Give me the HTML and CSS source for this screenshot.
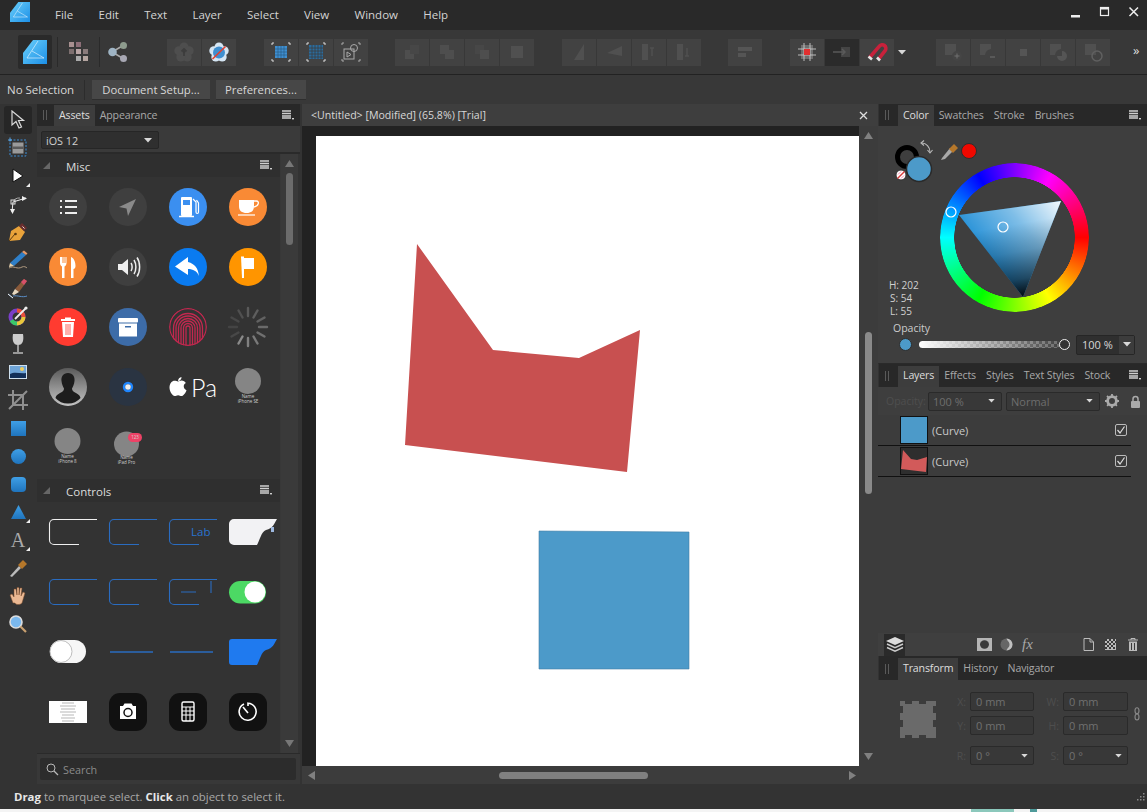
FILE: index.html
```html
<!DOCTYPE html>
<html lang="en">
<head>
<meta charset="utf-8">
<title>Affinity Designer</title>
<link rel="stylesheet" href="styles.css">
</head>
<body>
<svg class="defs" width="0" height="0" aria-hidden="true">
  <defs>
    <linearGradient id="logoG" x1="0" y1="0" x2="1" y2="1"><stop offset="0" stop-color="#6bd0fb"/><stop offset="1" stop-color="#1c8fe6"/></linearGradient>
    <linearGradient id="toolBlue" x1="0" y1="0" x2="0" y2="1"><stop offset="0" stop-color="#3f9fe6"/><stop offset="1" stop-color="#1f74bd"/></linearGradient>
    <linearGradient id="avatarG" x1="0" y1="0" x2="0" y2="1"><stop offset="0" stop-color="#5a5a5a"/><stop offset="1" stop-color="#c4c4c4"/></linearGradient>
    <linearGradient id="triWhite" gradientUnits="userSpaceOnUse" x1="1061" y1="201" x2="990" y2="258"><stop offset="0" stop-color="#fff" stop-opacity=".95"/><stop offset=".5" stop-color="#fff" stop-opacity=".4"/><stop offset="1" stop-color="#fff" stop-opacity="0"/></linearGradient>
    <linearGradient id="triBlack" gradientUnits="userSpaceOnUse" x1="1023" y1="297" x2="1007" y2="207"><stop offset="0" stop-color="#000" stop-opacity=".95"/><stop offset=".2" stop-color="#000" stop-opacity=".55"/><stop offset=".5" stop-color="#000" stop-opacity=".2"/><stop offset=".8" stop-color="#000" stop-opacity="0"/></linearGradient>
    <clipPath id="fpClip"><circle cx="30" cy="30" r="19"/></clipPath>
    <symbol id="logo" viewBox="0 0 24 24">
      <path d="M10 0H24V24H0V13Z" fill="url(#logoG)"/>
      <path d="M15 1 4 18H21M9 11 21 18" fill="none" stroke="#e8f6ff" stroke-opacity=".8" stroke-width=".8"/>
    </symbol>
    <symbol id="menu" viewBox="0 0 12 10">
      <path d="M0 1h9M0 3.500h9M0 6h9M0 8h9" stroke="#cfcfcf" stroke-width="1.300"/><rect x="10" y="8" width="2" height="1.400" fill="#cfcfcf"/>
    </symbol>
    <symbol id="caret" viewBox="0 0 8 5"><path d="M0 0h8L4 4.500Z" fill="#d8d8d8"/></symbol>
  </defs>
</svg>

<div class="app">
  <header class="titlebar">
    <svg class="top-logo"><use href="#logo"/></svg>
    <nav class="menubar">
      <span>File</span><span>Edit</span><span>Text</span><span>Layer</span><span>Select</span><span>View</span><span>Window</span><span>Help</span>
    </nav>
    <div class="winctl">
      <svg width="12" height="12" viewBox="0 0 12 12"><rect x="1" y="9" width="9" height="2.500" fill="#eee"/></svg>
      <svg width="12" height="12" viewBox="0 0 12 12"><rect x="1.500" y="1.500" width="8" height="8" fill="none" stroke="#eee" stroke-width="1.200"/><rect x="1" y="1" width="9" height="2.500" fill="#eee"/></svg>
      <svg width="12" height="12" viewBox="0 0 12 12"><path d="M1.500 1.500 10 10M10 1.500 1.500 10" stroke="#eee" stroke-width="1.500"/></svg>
    </div>
  </header>

  <div class="toolbar">
    <div class="app-btn"><svg width="24" height="24"><use href="#logo"/></svg></div>
    <i class="tb-sep"></i>
    <svg class="tb-plain" width="20" height="20" viewBox="0 0 20 20">
      <g fill="#b8a8a8"><rect x="0" y="0" width="5" height="5" fill="#a89090"/><rect x="7" y="0" width="5" height="5" fill="#8d6f78"/><rect x="7" y="7" width="5" height="5" fill="#b9a5a5"/><rect x="0" y="7" width="5" height="5" fill="#7d6f6f"/><rect x="14" y="7" width="5" height="5" fill="#8a7b7b"/><rect x="7" y="14" width="5" height="5" fill="#aaa"/><rect x="14" y="14" width="5" height="5" fill="#b5a5a0"/></g>
    </svg>
    <i class="tb-sep tb-sep-b"></i>
    <svg class="tb-plain tb-share" width="20" height="20" viewBox="0 0 20 20"><path d="M4 10 16 3M4 10l12 7" stroke="#aaa" stroke-width="1.500"/><circle cx="4.500" cy="10" r="4.300" fill="#9fb4c4"/><circle cx="15.500" cy="3.500" r="3.500" fill="#8d9b8d"/><circle cx="15.500" cy="16.500" r="3.500" fill="#a8a8b4"/></svg>

    <div class="tb-groups">
      <div class="group">
        <button class="tb"><svg width="20" height="20" viewBox="0 0 20 20"><g fill="#4e4e4e"><circle cx="10" cy="5" r="4.500"/><circle cx="15.200" cy="8.800" r="4.500"/><circle cx="13.200" cy="15" r="4.500"/><circle cx="6.800" cy="15" r="4.500"/><circle cx="4.800" cy="8.800" r="4.500"/></g><path d="M10 7v7M7.500 9.500 10 7l2.500 2.500" stroke="#3d3d3d" stroke-width="1.800" fill="none"/></svg></button>
        <button class="tb"><svg width="20" height="20" viewBox="0 0 20 20"><g fill="#d5e6f4"><circle cx="10" cy="5" r="4.500"/><circle cx="15.200" cy="8.800" r="4.500"/><circle cx="13.200" cy="15" r="4.500"/><circle cx="6.800" cy="15" r="4.500"/><circle cx="4.800" cy="8.800" r="4.500"/></g><circle cx="10" cy="10.500" r="6" fill="#3f8fd0"/><path d="M3.500 17 16.500 4.500" stroke="#e4402e" stroke-width="1.600"/></svg></button>
      </div>
      <div class="group">
        <button class="tb"><svg width="20" height="20" viewBox="0 0 20 20"><g fill="none" stroke="#ddd" stroke-width="1"><path d="M1 3V1h2M17 1h2v2M19 17v2h-2M3 19H1v-2"/></g><rect x="4" y="4" width="12" height="12" fill="#3f8fd0"/><path d="M4 7h12M4 10h12M4 13h12M7 4v12M10 4v12M13 4v12" stroke="#2a5d86" stroke-width=".7"/></svg></button>
        <button class="tb"><svg width="20" height="20" viewBox="0 0 20 20"><g fill="none" stroke="#ddd" stroke-width="1"><path d="M1 3V1h2M17 1h2v2M19 17v2h-2M3 19H1v-2"/></g><rect x="3" y="3" width="14" height="14" fill="#2a6c9e"/><path d="M3 6h14M3 9h14M3 12h14M3 15h14M6 3v14M9 3v14M12 3v14M15 3v14" stroke="#3d3d3d" stroke-width=".8"/></svg></button>
        <button class="tb"><svg width="20" height="20" viewBox="0 0 20 20"><g fill="none" stroke="#aaa" stroke-width="1"><path d="M1 3V1h2M17 1h2v2M19 17v2h-2M3 19H1v-2"/><rect x="3" y="7" width="10" height="10"/><circle cx="13" cy="6" r="3.500"/><path d="M6 10v5l4-2.500Z"/></g></svg></button>
      </div>
      <div class="group">
        <button class="tb"><svg width="20" height="20" viewBox="0 0 20 20" fill="#4e4e4e"><rect x="3" y="8" width="9" height="9"/><rect x="8" y="3" width="9" height="9" fill="#474747"/></svg></button>
        <button class="tb"><svg width="20" height="20" viewBox="0 0 20 20" fill="#4e4e4e"><path d="M3 3h9v5h5v9H8v-5H3Z"/></svg></button>
        <button class="tb"><svg width="20" height="20" viewBox="0 0 20 20" fill="#4e4e4e"><path d="M3 3h9v5h5v9H8v-5H3Z" fill="#474747"/><rect x="8" y="8" width="9" height="9"/></svg></button>
        <button class="tb"><svg width="20" height="20" viewBox="0 0 20 20"><rect x="4" y="4" width="12" height="12" fill="#505050"/></svg></button>
      </div>
      <div class="group">
        <button class="tb"><svg width="20" height="20" viewBox="0 0 20 20"><path d="M15 2 5 18h10Z" fill="#505050"/></svg></button>
        <button class="tb"><svg width="20" height="20" viewBox="0 0 20 20"><path d="M18 4 3 11l15 3Z" fill="#505050"/></svg></button>
        <button class="tb"><svg width="20" height="20" viewBox="0 0 20 20"><rect x="3" y="2" width="6" height="16" fill="#505050"/><path d="M13 6v8M11 6h4" stroke="#505050" stroke-width="1.500"/></svg></button>
        <button class="tb"><svg width="20" height="20" viewBox="0 0 20 20"><rect x="3" y="2" width="6" height="16" fill="#505050"/><path d="M13 6v8M11 14h4" stroke="#505050" stroke-width="1.500"/></svg></button>
      </div>
      <div class="group">
        <button class="tb"><svg width="20" height="20" viewBox="0 0 20 20" fill="#555"><rect x="3" y="5" width="14" height="4"/><rect x="3" y="11" width="8" height="4"/></svg></button>
      </div>
      <div class="group">
        <button class="tb"><svg width="20" height="20" viewBox="0 0 20 20"><path d="M4 3h12v14H4Z" fill="#6f6f6f"/><path d="M1 7h18M1 13h18M7 1v18M13 1v18" stroke="#c8c8c8" stroke-width=".9"/><rect x="7" y="7" width="6" height="6" fill="#e23030"/></svg></button>
        <button class="tb tb-dark"><svg width="20" height="20" viewBox="0 0 20 20"><rect x="9" y="5" width="9" height="10" fill="#444"/><path d="M1 10h12M10 7l3 3-3 3" stroke="#5a5a5a" stroke-width="1.500" fill="none"/></svg></button>
        <button class="tb"><svg width="22" height="22" viewBox="0 0 22 22"><path d="M4 17 13 5a3.500 3.500 0 0 1 6 4L13 18" fill="none" stroke="#c8213b" stroke-width="3.600" transform="rotate(4 11 11)"/><path d="M2.500 15.500l3.500 3M11 16.500l3 3" stroke="#e4e4e4" stroke-width="2.600"/></svg></button>
        <button class="tb tb-drop"><svg width="8" height="5"><use href="#caret"/></svg></button>
      </div>
      <div class="group">
        <button class="tb"><svg width="22" height="22" viewBox="0 0 22 22"><rect x="3" y="3" width="11" height="11" fill="#505050"/><circle cx="15" cy="15" r="5" fill="#454545"/><path d="M15 12.500v5M12.500 15h5" stroke="#707070"/></svg></button>
        <button class="tb"><svg width="22" height="22" viewBox="0 0 22 22"><path d="M3 3h11v5a7 7 0 0 0-6 6H3Z" fill="#505050"/><path d="M13 16h5" stroke="#707070"/></svg></button>
        <button class="tb"><svg width="22" height="22" viewBox="0 0 22 22"><rect x="8" y="8" width="7" height="7" fill="#555"/></svg></button>
        <button class="tb"><svg width="22" height="22" viewBox="0 0 22 22"><path d="M3 3h11v5a7 7 0 0 0-6 6H3Z" fill="#505050"/><path d="M15 10a5 5 0 0 1 0 10 5 5 0 0 1-5-5h5Z" fill="#555"/></svg></button>
        <button class="tb"><svg width="22" height="22" viewBox="0 0 22 22"><rect x="3" y="3" width="11" height="11" fill="#505050"/><circle cx="15" cy="15" r="5" fill="none" stroke="#606060" stroke-width="1.500"/></svg></button>
      </div>
    </div>
    <span class="more">»</span>
  </div>

  <div class="context">
    <span class="ctx-label">No Selection</span>
    <i class="ctx-sep"></i>
    <button class="ctx-btn ctx-doc">Document Setup...</button>
    <button class="ctx-btn ctx-pref">Preferences...</button>
  </div>

  <div class="main">
    <aside class="tools">
      <div class="tool tool-on"><svg width="16" height="20" viewBox="0 0 16 20"><path d="M2 1v14l4-3.500 3 6.500 2.500-1-3-6.500h5Z" fill="#2b2b2b" stroke="#d8d8d8" stroke-width="1.200"/></svg></div>
      <div class="tool"><svg width="22" height="22" viewBox="0 0 22 22"><rect x="3" y="3" width="16" height="16" fill="none" stroke="#3c8fd8" stroke-dasharray="2 1.500"/><rect x="5.500" y="5.500" width="11" height="11" fill="#9a9a9a"/><rect x="5.500" y="9.500" width="11" height="2.500" fill="#5a5a5a"/><path d="M3 .5v4M1 3h4" stroke="#5aa7e8"/></svg></div>
      <div class="tool tool-more"><svg width="16" height="16" viewBox="0 0 16 16"><path d="M3 1 13 8 3 14Z" fill="#fff" stroke="#111"/></svg></div>
      <div class="tool"><svg width="22" height="22" viewBox="0 0 22 22"><path d="M6 9 19 5M6 9 5 19" stroke="#eee" stroke-width="1"/><path d="M6 9a7 7 0 0 1 7-4" fill="none" stroke="#aaa"/><rect x="4" y="7" width="4" height="4" fill="none" stroke="#ddd"/><path d="M15 3l5 2.500-5 2.500ZM3 16l2.500 5 2.500-5Z" fill="#eee"/></svg></div>
      <div class="tool"><svg width="22" height="22" viewBox="0 0 22 22"><path d="M2 20 4 10 12 5l6 6-5 8Z" fill="#e9a33a"/><path d="M2 20 8 13" stroke="#5b3a10"/><circle cx="8.500" cy="13" r="1.300" fill="#5b3a10"/><path d="M12 5l3-3 5 5-3 3Z" fill="#6a2e2e"/><path d="M15.500 5.500l2 2" stroke="#ddd"/></svg></div>
      <div class="tool"><svg width="22" height="22" viewBox="0 0 22 22"><path d="M3 14 15 3l4 3L7 17Z" fill="#2f7fc8"/><path d="M15 3l2-1.500 3.500 3L19 6Z" fill="#e59a6a"/><path d="M3 14l-1 4 5-1Z" fill="#ead5b0"/><path d="M2 19c5-3 8 2 13-1 2-1 4 0 5 1" fill="none" stroke="#b09a80"/></svg></div>
      <div class="tool"><svg width="22" height="22" viewBox="0 0 22 22"><path d="M8 12 17 2l3 2-8 11Z" fill="#8a5a3a"/><path d="M14 5l3-3 3 2-3 4Z" fill="#d8506a"/><path d="M8 12l4 3-5 3-2-1Z" fill="#e8d8c0"/><path d="M1 17l5 4M6 19c5-1 9 2 14 0" fill="none" stroke="#5a8ec8"/><path d="M1 17l5 4" stroke="#eee"/></svg></div>
      <div class="tool"><svg width="22" height="22" viewBox="0 0 22 22"><circle cx="10" cy="12" r="6.500" fill="none" stroke="#7a3fc8" stroke-width="4"/><path d="M10 5.500a6.500 6.500 0 0 1 6.500 6.500" fill="none" stroke="#e8503a" stroke-width="4"/><path d="M16.500 12a6.500 6.500 0 0 1-6.500 6.500" fill="none" stroke="#e8c83a" stroke-width="4"/><path d="M10 18.500a6.500 6.500 0 0 1-5.600-3.200" fill="none" stroke="#3ac86a" stroke-width="4"/><path d="M8 14 19 3" stroke="#eee" stroke-width="1.800"/><circle cx="19" cy="3" r="1.600" fill="#eee"/></svg></div>
      <div class="tool"><svg width="20" height="22" viewBox="0 0 20 22"><path d="M5 1h10c1 6 0 11-5 11S4 7 5 1Z" fill="#ccc"/><path d="M10 12v7M5 20h10" stroke="#bbb" stroke-width="1.500"/></svg></div>
      <div class="tool"><svg width="22" height="20" viewBox="0 0 22 20"><rect x="2" y="3" width="18" height="14" fill="#cfe0ee"/><rect x="3" y="4" width="16" height="12" fill="#6fa5d8"/><path d="M3 12c5-3 10 0 16-1v5H3Z" fill="#12305a"/><circle cx="15" cy="7" r="2" fill="#f0d060"/></svg></div>
      <div class="tool"><svg width="20" height="20" viewBox="0 0 20 20"><path d="M5 0v15h15M0 5h15v15M19 1 1 19" fill="none" stroke="#8f8f8f" stroke-width="2"/></svg></div>
      <div class="tool"><svg width="15" height="15"><rect width="15" height="15" fill="url(#toolBlue)"/></svg></div>
      <div class="tool"><svg width="15" height="15"><circle cx="7.500" cy="7.500" r="7.500" fill="url(#toolBlue)"/></svg></div>
      <div class="tool"><svg width="15" height="15"><rect width="15" height="15" rx="4" fill="url(#toolBlue)"/></svg></div>
      <div class="tool tool-more"><svg width="15" height="15"><path d="M7.500 0 15 14H0Z" fill="url(#toolBlue)"/></svg></div>
      <div class="tool tool-more tool-a">A</div>
      <div class="tool"><svg width="20" height="20" viewBox="0 0 20 20"><path d="M2 18 11 8l2 2-9 9Z" fill="#bbb"/><path d="M10 7l5-5 4 4-5 5Z" fill="#b5772a"/></svg></div>
      <div class="tool"><svg width="20" height="20" viewBox="0 0 20 20"><path d="M5 17 2 9l2-1 2 3V3l2 0 1 6V1.500h2V9l1-7h2l-1 8 2-4 2 1-3 10c-2 2-6 2-7 0Z" fill="#eab893" stroke="#7a4a2a" stroke-width=".5"/></svg></div>
      <div class="tool"><svg width="20" height="20" viewBox="0 0 20 20"><circle cx="8" cy="8" r="6" fill="#7ab8ee" stroke="#ddd" stroke-width="1.600"/><path d="M12.500 12.500 18 18" stroke="#c8a070" stroke-width="2.200"/></svg></div>
    </aside>

    <section class="assets">
      <div class="tabbar">
        <i class="grip"></i>
        <span class="tab tab-on">Assets</span>
        <span class="tab">Appearance</span>
        <svg class="panel-menu" width="12" height="10"><use href="#menu"/></svg>
      </div>
      <div class="assets-select">
        <div class="select select-ios"><span>iOS 12</span><svg width="8" height="5"><use href="#caret"/></svg></div>
      </div>
      <div class="assets-body">
        <div class="assets-list">
          <div class="cat-head">
            <svg class="cat-tri" width="7" height="7"><path d="M7 0v7H0Z" fill="#666"/></svg>
            <span>Misc</span>
            <svg class="panel-menu" width="12" height="10"><use href="#menu"/></svg>
          </div>
          <div class="asset-grid">
            <div class="asset"><svg viewBox="0 0 60 60"><circle cx="30" cy="30" r="19" fill="#3f3f3f"/><path d="M27 24h12M27 30h12M27 36h12" stroke="#eee" stroke-width="2"/><path d="M22 24h2M22 30h2M22 36h2" stroke="#eee" stroke-width="2"/></svg></div>
            <div class="asset"><svg viewBox="0 0 60 60"><circle cx="30" cy="30" r="19" fill="#3f3f3f"/><path d="M38 22 30 39l-1.500-7.500L21 30Z" fill="#8a8a8a"/></svg></div>
            <div class="asset"><svg viewBox="0 0 60 60"><circle cx="30" cy="30" r="19" fill="#3b8ff0"/><rect x="23" y="20" width="11" height="19" rx="1" fill="#fff"/><rect x="25" y="23" width="7" height="5" fill="#3b8ff0"/><path d="M21 39.500h15" stroke="#fff" stroke-width="1.500"/><path d="M35 22l3 3v10c0 2 2.500 2 2.500 0v-9l-2-3" fill="none" stroke="#fff" stroke-width="1.200"/></svg></div>
            <div class="asset"><svg viewBox="0 0 60 60"><circle cx="30" cy="30" r="19" fill="#f98a35"/><path d="M21 23h15v6c0 5-3 7-7.500 7S21 34 21 29Z" fill="#fff"/><path d="M36 24h2.500c3 0 2.500 5-2.500 6" fill="none" stroke="#fff" stroke-width="1.300"/><path d="M20 38h17" stroke="#fff" stroke-width="1.200"/></svg></div>

            <div class="asset"><svg viewBox="0 0 60 60"><circle cx="30" cy="30" r="19" fill="#f98a35"/><path d="M22 20v6c0 2 1 3 2 3.500V41h2.500V29.500c1-.5 2-1.500 2-3.500v-6h-1v6h-1v-6h-1v6h-1v-6Z" fill="#fff"/><path d="M33 41V20c3 1 4.500 5 4.500 9 0 2-1 3-2 3v9Z" fill="#fff"/></svg></div>
            <div class="asset"><svg viewBox="0 0 60 60"><circle cx="30" cy="30" r="19" fill="#3f3f3f"/><path d="M20 27h4l6-5v16l-6-5h-4Z" fill="#eee"/><path d="M33 26c1.500 2 1.500 6 0 8M36 23c2.500 4 2.500 10 0 14M39 20.500c3.500 5 3.500 14 0 19" fill="none" stroke="#eee" stroke-width="1.500"/></svg></div>
            <div class="asset"><svg viewBox="0 0 60 60"><circle cx="30" cy="30" r="19" fill="#0a7bf0"/><path d="M30 20 17 29.500 30 38v-6c5 0 9 2 11 7-1-8-4-12-11-14Z" fill="#fff"/></svg></div>
            <div class="asset"><svg viewBox="0 0 60 60"><circle cx="30" cy="30" r="19" fill="#ff9500"/><path d="M23 19.500h3V41h-2Z" fill="#fff"/><path d="M25 21h11v11H25Z" fill="#fff"/></svg></div>

            <div class="asset"><svg viewBox="0 0 60 60"><circle cx="30" cy="30" r="19" fill="#ff3b30"/><path d="M23 22h14v2H23ZM27 20.500h6V22h-6Z" fill="#fff"/><path d="M24 25h12l-1 15H25Z" fill="#fff"/><path d="M28 27v11M30 27v11M32 27v11" stroke="#ff3b30" stroke-width=".8"/></svg></div>
            <div class="asset"><svg viewBox="0 0 60 60"><circle cx="30" cy="30" r="19" fill="#3d6ca8"/><rect x="20" y="21" width="20" height="4.500" rx="1" fill="#fff"/><rect x="21" y="26.500" width="18" height="13" fill="#fff"/><rect x="27" y="29" width="6" height="1.500" fill="#3d6ca8"/></svg></div>
            <div class="asset"><svg viewBox="0 0 60 60"><g clip-path="url(#fpClip)" fill="none" stroke="#c2284f" stroke-width="1.300"><circle cx="30" cy="30" r="18.300"/><path d="M28 50V31a2 2 0 0 1 4 0v19M25.500 50V31a4.500 4.500 0 0 1 9 0v19M23 50V31a7 7 0 0 1 14 0v19M20.500 50V31a9.500 9.500 0 0 1 19 0v19M18 50V31a12 12 0 0 1 24 0v19M15.500 50V31a14.500 14.500 0 0 1 29 0v19"/></g></svg></div>
            <div class="asset"><svg viewBox="0 0 60 60"><g stroke-width="2.400" stroke-linecap="round"><path d="M30 11v8" stroke="#5a5a5a"/><path d="M39.500 13.500l-4 7" stroke="#5e5e5e"/><path d="M46.500 20.500l-7 4" stroke="#626262"/><path d="M49 30h-8" stroke="#6a6a6a"/><path d="M46.500 39.500l-7-4" stroke="#707070"/><path d="M39.500 46.500l-4-7" stroke="#7a7a7a"/><path d="M30 49v-8" stroke="#808080"/><path d="M20.500 46.500l4-7" stroke="#8a8a8a"/><path d="M13.500 39.500l7-4" stroke="#484848"/><path d="M11 30h8" stroke="#444"/><path d="M13.500 20.500l7 4" stroke="#484848"/><path d="M20.500 13.500l4 7" stroke="#505050"/></g></svg></div>

            <div class="asset"><svg viewBox="0 0 60 60"><circle cx="30" cy="30" r="19" fill="url(#avatarG)"/><path d="M30 16c-5 0-7 4-6.500 8 .3 3 1.500 6 2.500 7.500 0 2-1 3-4 4.500s-4 3-4.500 5A16.500 16.500 0 0 0 30 46.500 16.500 16.500 0 0 0 42.500 41c-.5-2-1.500-3.500-4.500-5s-4-2.500-4-4.500c1-1.500 2.200-4.500 2.500-7.500.5-4-1.500-8-6.500-8Z" fill="#1d1d1d"/></svg></div>
            <div class="asset"><svg viewBox="0 0 60 60"><circle cx="30" cy="30" r="19" fill="#2a3442"/><circle cx="30" cy="30" r="4" fill="none" stroke="#1f86ff" stroke-width="2.400"/><circle cx="30" cy="30" r="2.800" fill="#eee"/></svg></div>
            <div class="asset asset-pay"><svg width="18" height="20" viewBox="0 0 18 20"><path d="M9 4.500c1 0 2-1 3.500-1 2 0 3.500 1 4.300 2.500-3 1.500-2.600 6 .7 7.200-.8 2.500-3 5.800-5 5.800-1.300 0-1.800-.8-3.400-.8s-2.200.8-3.400.8C3.500 19 .5 14.500.5 10.500c0-4 2.600-6.700 5-6.700 1.500 0 2.500.7 3.500.7Z" fill="#fff"/><path d="M9 4c0-2 1.700-3.800 3.500-4 .2 2-1.500 4-3.500 4Z" fill="#fff"/></svg><span>Pa</span></div>
            <div class="asset"><svg viewBox="0 0 60 60"><circle cx="30" cy="24" r="13" fill="#858585"/><text class="tiny" x="30" y="41">Name</text><text class="tiny" x="30" y="46">iPhone SE</text></svg></div>

            <div class="asset"><svg viewBox="0 0 60 60"><circle cx="29.500" cy="24" r="13" fill="#858585"/><text class="tiny" x="29.500" y="41">Name</text><text class="tiny" x="29.500" y="46">iPhone 8</text></svg></div>
            <div class="asset"><svg viewBox="0 0 60 60"><circle cx="28.500" cy="27" r="12.500" fill="#858585"/><rect x="30" y="16" width="14" height="9" rx="4.500" fill="#ee4266"/><text class="tiny" x="37" y="22">123</text><text class="tiny" x="28.500" y="41.500">Name</text><text class="tiny" x="28.500" y="46.500">iPad Pro</text></svg></div>
          </div>

          <div class="cat-head">
            <svg class="cat-tri" width="7" height="7"><path d="M7 0v7H0Z" fill="#666"/></svg>
            <span>Controls</span>
            <svg class="panel-menu" width="12" height="10"><use href="#menu"/></svg>
          </div>
          <div class="asset-grid">
            <div class="asset"><svg viewBox="0 0 60 60"><path d="M59 17.500H16a4.500 4.500 0 0 0-4.500 4.500v16a4.500 4.500 0 0 0 4.500 4.500h25" class="ln-w"/></svg></div>
            <div class="asset"><svg viewBox="0 0 60 60"><path d="M59 17.500H16a4.500 4.500 0 0 0-4.500 4.500v16a4.500 4.500 0 0 0 4.500 4.500h25" class="ln-b"/></svg></div>
            <div class="asset"><svg viewBox="0 0 60 60"><path d="M59 17.500H16a4.500 4.500 0 0 0-4.500 4.500v16a4.500 4.500 0 0 0 4.500 4.500h25" class="ln-b"/><text class="lab" x="33" y="34">Lab</text></svg></div>
            <div class="asset"><svg viewBox="0 0 60 60"><path d="M16 17h43c-3 5-4 9-11 11-5 2-6 10-9 15H16a5 5 0 0 1-5-5V22a5 5 0 0 1 5-5Z" fill="#f2f2f4"/><rect x="53" y="25" width="3" height="5" fill="#9db8df"/></svg></div>

            <div class="asset"><svg viewBox="0 0 60 60"><path d="M59 17.500H16a4.500 4.500 0 0 0-4.500 4.500v16a4.500 4.500 0 0 0 4.500 4.500h25" class="ln-b"/></svg></div>
            <div class="asset"><svg viewBox="0 0 60 60"><path d="M59 17.500H16a4.500 4.500 0 0 0-4.500 4.500v16a4.500 4.500 0 0 0 4.500 4.500h25" class="ln-b"/></svg></div>
            <div class="asset"><svg viewBox="0 0 60 60"><path d="M59 17.500H16a4.500 4.500 0 0 0-4.500 4.500v16a4.500 4.500 0 0 0 4.500 4.500h25M23 30h15M53 19v12" class="ln-b"/></svg></div>
            <div class="asset"><svg viewBox="0 0 60 60"><rect x="11" y="19" width="37" height="22.500" rx="11.200" fill="#4cd964"/><circle cx="37" cy="30" r="10.500" fill="#fff"/></svg></div>

            <div class="asset"><svg viewBox="0 0 60 60"><rect x="12" y="18" width="36" height="23" rx="11.500" fill="#f6f6f6"/><circle cx="23" cy="29.500" r="11" fill="#fff" stroke="#bcbcbc"/></svg></div>
            <div class="asset"><svg viewBox="0 0 60 60"><path d="M12 30h43" class="ln-b ln-2"/></svg></div>
            <div class="asset"><svg viewBox="0 0 60 60"><path d="M12 30h43" class="ln-b ln-2"/></svg></div>
            <div class="asset"><svg viewBox="0 0 60 60"><path d="M14 17h45c-3 5-4 9-11 11-5 2-6 10-9 15H14a3 3 0 0 1-3-3V20a3 3 0 0 1 3-3Z" fill="#1f7aef"/></svg></div>

            <div class="asset"><svg viewBox="0 0 60 60"><rect x="11" y="19" width="38" height="22" fill="#fff"/><g stroke="#999" stroke-width=".7"><path d="M24 21h12M22 24h16M23 27h14M22 30h16M24 33h12M23 36h14M24 39h12"/></g></svg></div>
            <div class="asset"><svg viewBox="0 0 60 60"><rect x="11" y="11" width="38" height="38" rx="11" fill="#111"/><path d="M22 24h3l1.500-2.500h7L35 24h3v13H22Z" fill="#fff"/><circle cx="30" cy="30.500" r="4" fill="none" stroke="#111" stroke-width="1.500"/></svg></div>
            <div class="asset"><svg viewBox="0 0 60 60"><rect x="11" y="11" width="38" height="38" rx="11" fill="#111"/><rect x="24" y="20" width="12" height="19" rx="1.500" fill="none" stroke="#fff" stroke-width="1.400"/><path d="M24 25h12M24 29h12M24 33h12M28 25v14M32 25v14" stroke="#fff"/></svg></div>
            <div class="asset"><svg viewBox="0 0 60 60"><rect x="11" y="11" width="38" height="38" rx="11" fill="#111"/><path d="M26 22a8.500 8.500 0 1 0 4-.8V24" fill="none" stroke="#fff" stroke-width="1.600"/><path d="M30 31l-5-6" stroke="#fff" stroke-width="1.600"/></svg></div>
          </div>
        </div>
        <div class="vscroll vscroll-assets">
          <svg width="9" height="7"><path d="M4.500 0 9 7H0Z" fill="#777"/></svg>
          <div class="track"><i class="thumb thumb-assets"></i></div>
          <svg width="9" height="7"><path d="M0 0h9L4.500 7Z" fill="#777"/></svg>
        </div>
      </div>
      <div class="searchbar">
        <div class="searchbox">
          <svg width="13" height="13" viewBox="0 0 13 13"><circle cx="5" cy="5" r="4" fill="none" stroke="#b8b8b8"/><path d="M8 8l4 4" stroke="#b8b8b8" stroke-width="1.200"/></svg>
          <span>Search</span>
        </div>
      </div>
    </section>

    <section class="document">
      <div class="doc-tab">
        <span>&lt;Untitled&gt; [Modified] (65.8%) [Trial]</span>
        <svg width="9" height="9" viewBox="0 0 9 9"><path d="M1 1l7 7M8 1 1 8" stroke="#ddd" stroke-width="1.300"/></svg>
      </div>
      <div class="doc-view">
        <div class="doc-canvas">
          <div class="doc-gutter"></div>
          <div class="page">
            <svg class="art" viewBox="316 136 543 630" preserveAspectRatio="none">
              <polygon points="417,244 493,350 579,358 640,330 627,472 405,445" fill="#c85050"/>
              <polygon points="539,531 689,532 689,669 539,669" fill="#4c9ac9" stroke="#3f7ea6" stroke-width=".6"/>
            </svg>
          </div>
          <div class="vscroll vscroll-doc">
            <svg width="9" height="7"><path d="M4.500 0 9 7H0Z" fill="#808080"/></svg>
            <div class="track"><i class="thumb thumb-doc"></i></div>
            <svg width="9" height="7"><path d="M0 0h9L4.500 7Z" fill="#808080"/></svg>
          </div>
        </div>
        <div class="hscroll">
          <svg width="7" height="9"><path d="M7 0v9L0 4.500Z" fill="#808080"/></svg>
          <div class="htrack"><i class="hthumb"></i></div>
          <svg width="7" height="9"><path d="M0 0v9l7-4.500Z" fill="#808080"/></svg>
        </div>
      </div>
    </section>

    <aside class="right">
      <div class="tabbar">
        <i class="grip"></i>
        <span class="tab tab-on">Color</span><span class="tab">Swatches</span><span class="tab">Stroke</span><span class="tab">Brushes</span>
        <svg class="panel-menu" width="12" height="10"><use href="#menu"/></svg>
      </div>
      <div class="color-panel">
        <svg class="color-tools" width="100" height="60" viewBox="0 0 100 60">
          <circle cx="29" cy="31" r="9.500" fill="none" stroke="#000" stroke-width="5"/>
          <path d="M44 17c4 0 8 4 8 9" fill="none" stroke="#bbb" stroke-width="1.100"/><path d="M46 14.500 43 17l3 2.500M49.500 24l2.500 3 2.500-3" fill="none" stroke="#bbb" stroke-width="1.100"/>
          <circle cx="41" cy="43" r="12.500" fill="#4c9ac9" stroke="#2a2a2a" stroke-width="1.500"/>
          <circle cx="23" cy="49" r="5" fill="#fff" stroke="#333"/><path d="M19.500 52.500l7-7" stroke="#d83a3a" stroke-width="1.500"/><path d="M20 48.500l3-3M23 52.500l3-3" stroke="#e58" stroke-width=".7"/>
          <path d="M64 32 72 22l3 3-8 8-4 1Z" fill="#a8a8a8"/><path d="M71 23l5-5 4 4-5 5Z" fill="#b5772a"/>
          <circle cx="91" cy="25" r="7.500" fill="#f00800" stroke="#2e2e2e"/>
        </svg>
        <div class="wheel"></div>
        <svg class="tri" width="269" height="236" viewBox="878 126 269 236">
          <polygon points="959,215 1061,201 1023,297" fill="#2a93d8"/>
          <polygon points="959,215 1061,201 1023,297" fill="url(#triWhite)"/>
          <polygon points="959,215 1061,201 1023,297" fill="url(#triBlack)"/>
          <circle cx="951" cy="212" r="5" fill="none" stroke="#fff" stroke-width="1.200"/>
          <circle cx="1003" cy="227" r="5" fill="none" stroke="#fff" stroke-width="1.200"/>
        </svg>
        <div class="hsl"><span>H: 202</span><span class="hsl-in">S: 54</span><span class="hsl-in">L: 55</span></div>
        <div class="op-label">Opacity</div>
        <div class="op-row">
          <i class="op-swatch"></i>
          <div class="op-slider"><i class="op-ring"></i></div>
          <div class="op-input"><span>100 %</span><b class="op-drop"><svg width="8" height="5"><use href="#caret"/></svg></b></div>
        </div>
      </div>

      <div class="tabbar tabbar-layers">
        <i class="grip"></i>
        <span class="tab tab-on">Layers</span><span class="tab">Effects</span><span class="tab">Styles</span><span class="tab">Text Styles</span><span class="tab">Stock</span>
        <svg class="panel-menu" width="12" height="10"><use href="#menu"/></svg>
      </div>
      <div class="layers-panel">
        <div class="layers-ctl">
          <span class="dim-label">Opacity:</span>
          <div class="select select-dis select-op"><span>100 %</span><svg width="7" height="4"><use href="#caret"/></svg></div>
          <div class="select select-dis select-norm"><span>Normal</span><svg width="7" height="4"><use href="#caret"/></svg></div>
          <svg class="gear" width="14" height="14" viewBox="0 0 14 14"><circle cx="7" cy="7" r="4.400" fill="none" stroke="#aaa" stroke-width="2.800"/><path d="M7 0v14M0 7h14M2 2l10 10M12 2 2 12" stroke="#aaa" stroke-width="1.800" stroke-dasharray="2 10"/></svg>
          <svg class="lock" width="11" height="13" viewBox="0 0 11 13"><path d="M3 6V4a2.500 2.500 0 0 1 5 0v2" fill="none" stroke="#aaa" stroke-width="1.500"/><rect x="1" y="6" width="9" height="7" rx="1" fill="#aaa"/></svg>
        </div>
        <div class="layer">
          <div class="thumb-box"><i class="thumb-blue"></i></div>
          <span class="layer-name">(Curve)</span>
          <span class="check"><svg width="10" height="10" viewBox="0 0 10 10"><path d="M1.500 5 4 8 8.500 1.500" fill="none" stroke="#ddd" stroke-width="1.200"/></svg></span>
        </div>
        <div class="layer">
          <div class="thumb-box"><svg width="26" height="26" viewBox="0 0 26 26"><rect width="26" height="26" fill="#2e2e2e"/><path d="M2 2 10 11 16 12 26 9 25 24 0 21Z" fill="#d25a5a"/></svg></div>
          <span class="layer-name">(Curve)</span>
          <span class="check"><svg width="10" height="10" viewBox="0 0 10 10"><path d="M1.500 5 4 8 8.500 1.500" fill="none" stroke="#ddd" stroke-width="1.200"/></svg></span>
        </div>
      </div>
      <div class="layers-foot">
        <div class="stack-btn"><svg width="18" height="15" viewBox="0 0 18 15"><path d="M9 0l9 4-9 4-9-4Z" fill="#ddd"/><path d="M1 7l8 3.600L17 7M1 10.500l8 3.600 8-3.600" fill="none" stroke="#ccc" stroke-width="1.500"/></svg></div>
        <svg class="foot-mask" width="15" height="13" viewBox="0 0 15 13"><rect width="15" height="13" fill="#b5b5b5"/><ellipse cx="7.500" cy="6.500" rx="4.500" ry="4.200" fill="#3a3a3a"/></svg>
        <svg class="foot-adj" width="13" height="13" viewBox="0 0 13 13"><circle cx="6.500" cy="6.500" r="6" fill="#666"/><path d="M6.500.5a6 6 0 0 1 0 12c1-3 3-3 3-6s-2-3-3-6Z" fill="#c0c0c0"/></svg>
        <span class="fx">fx</span>
        <svg class="foot-doc" width="11" height="13" viewBox="0 0 11 13"><path d="M1 .5h6l3.500 3.500v8.500H1ZM7 .5V4h3.500" fill="none" stroke="#bbb"/></svg>
        <svg class="foot-chk" width="11" height="11" viewBox="0 0 11 11"><rect width="11" height="11" fill="#bbb"/><path d="M0 0h2v2H0ZM4 0h2v2H4ZM8 0h2v2H8ZM2 2h2v2H2ZM6 2h2v2H6ZM10 2h1v2h-1ZM0 4h2v2H0ZM4 4h2v2H4ZM8 4h2v2H8ZM2 6h2v2H2ZM6 6h2v2H6ZM0 8h2v2H0ZM4 8h2v2H4ZM8 8h2v2H8Z" fill="#3a3a3a"/></svg>
        <svg class="foot-trash" width="10" height="13" viewBox="0 0 10 13"><path d="M0 2h10M3 2V.5h4V2" fill="none" stroke="#bbb"/><path d="M1 3.500h8V13H1Z" fill="#bbb"/><path d="M3.500 5v7M6.500 5v7" stroke="#3a3a3a"/></svg>
      </div>
      <div class="tabbar tabbar-tr">
        <i class="grip"></i>
        <span class="tab tab-on">Transform</span><span class="tab">History</span><span class="tab">Navigator</span>
      </div>
      <div class="transform">
        <svg class="anchor" width="36" height="37" viewBox="0 0 36 37"><path d="M0 0h5v3h7V0h7v3h7V0h10v5h-3v7h3v7h-3v7h3v11H26v-3h-7v3h-7v-3H5v3H0V26h3v-7H0v-7h3V5H0Z" fill="#6a6a6a"/></svg>
        <div class="tr-grid">
          <label>X:</label><div class="field">0 mm</div><label>W:</label><div class="field">0 mm</div>
          <label>Y:</label><div class="field">0 mm</div><label>H:</label><div class="field">0 mm</div>
          <label class="tr-gap">R:</label><div class="field field-drop tr-gap"><span>0 °</span><svg width="7" height="4"><use href="#caret"/></svg></div>
          <label class="tr-gap">S:</label><div class="field field-drop tr-gap"><span>0 °</span><svg width="7" height="4"><use href="#caret"/></svg></div>
        </div>
        <svg class="link" width="6" height="14" viewBox="0 0 6 14"><g fill="none" stroke="#8a8a8a" stroke-width="1.100"><ellipse cx="3" cy="3.800" rx="2" ry="3"/><ellipse cx="3" cy="10" rx="2" ry="3"/></g></svg>
      </div>
    </aside>
  </div>

  <footer class="status">
    <span><b>Drag</b> to marquee select. <b>Click</b> an object to select it.</span>
    <svg class="size-grip" width="8" height="8" viewBox="0 0 8 8"><path d="M6 0h1.500v1.500H6ZM3 3h1.500v1.500H3ZM6 3h1.500v1.500H6ZM0 6h1.500v1.500H0ZM3 6h1.500v1.500H3ZM6 6h1.500v1.500H6Z" fill="#8a8a8a"/></svg>
  </footer>
</div>
<div class="desktop"><i class="desk-a"></i><i class="desk-b"></i></div>
</body>
</html>
```

FILE: styles.css
```css
* { box-sizing: border-box; }
html, body { margin: 0; height: 100%; }
body { width: 1147px; height: 812px; overflow: hidden; background: #f4f4f4; font-family: "Open Sans", "Noto Sans", sans-serif; font-size: 11px; color: #c8c8c8; }
.defs { position: absolute; }
i { display: block; }
svg { display: block; flex: none; }
button { font: inherit; color: inherit; border: 0; padding: 0; margin: 0; }

.app { width: 1147px; height: 809px; display: flex; flex-direction: column; background: #333; }
.desktop { height: 3px; display: flex; padding-left: 971px; gap: 16px; }
.desk-a { width: 43px; background: #8cc8bc; }
.desk-b { width: 7px; background: #4f9a9a; }

/* title */
.titlebar { height: 30px; flex: none; background: #292929; display: flex; align-items: flex-start; }
.top-logo { width: 20px; height: 20px; margin: 2px 0 0 10px; }
.menubar { display: flex; gap: 25.300px; margin: 7px 0 0 25px; font-size: 11.500px; line-height: 16px; color: #d4d4d4; }
.winctl { margin-left: auto; display: flex; gap: 17px; padding: 6px 7px 0 0; }

/* toolbar */
.toolbar { height: 45px; flex: none; background: #383838; border-bottom: 1px solid #222; display: flex; align-items: center; padding-left: 18px; position: relative; }
.app-btn { width: 34px; height: 34px; background: #2a2a2a; border-radius: 2px; display: flex; align-items: center; justify-content: center; }
.tb-sep { width: 1px; height: 30px; background: #2a2a2a; margin: 0 11px 0 5px; }
.tb-sep-b { margin: 0 8px 0 10px; }
.tb-groups { display: flex; gap: 27.500px; margin-left: 39px; }
.group { display: flex; gap: 1px; }
.tb { width: 34px; height: 27px; background: #424242; display: flex; align-items: center; justify-content: center; }
.tb-dark { background: #2b2b2b; }
.tb-drop { width: 14px; background: #383838; }
.more { position: absolute; left: 1133px; top: 11px; font-size: 13px; color: #ddd; }

/* context */
.context { height: 29px; flex: none; background: #383838; display: flex; align-items: center; padding-left: 7px; }
.ctx-label { width: 77px; font-size: 11.500px; color: #d8d8d8; }
.ctx-sep { width: 1px; height: 20px; background: #2c2c2c; margin-right: 7px; }
.ctx-btn { height: 20px; background: #474747; color: #d8d8d8; font-size: 11.300px; border-bottom: 1px solid #2e2e2e; }
.ctx-doc { width: 118px; margin-right: 6px; }
.ctx-pref { width: 90px; }

.main { flex: 1; display: flex; min-height: 0; }

/* tools */
.tools { width: 36px; flex: none; background: #333; display: flex; flex-direction: column; align-items: center; padding-top: 2px; }
.tool { width: 28px; height: 28px; flex: none; display: flex; align-items: center; justify-content: center; position: relative; }
.tool-on { background: #262626; border-radius: 3px; }
.tool-more::after { content: ""; position: absolute; right: 2px; bottom: 3px; border: 2.500px solid #eee; border-left-color: transparent; border-top-color: transparent; }
.tool-a { font-family: "Liberation Serif", serif; font-size: 20px; color: #aaa; }

/* tab bars */
.tabbar { height: 22px; flex: none; background: #282828; display: flex; align-items: flex-end; gap: 10px; position: relative; padding-left: 6px; }
.grip { width: 4px; height: 10px; border-left: 1px solid #5a5a5a; border-right: 1px solid #5a5a5a; margin: 0 -3px 6px 0; }
.right .grip { margin-right: -1px; }
.tab { height: 21px; line-height: 20px; font-size: 10.600px; letter-spacing: -.15px; color: #a8a8a8; white-space: nowrap; }
.tab-on { background: #3d3d3d; color: #ddd; padding: 0 5px; margin-right: -5px; }
.panel-menu { position: absolute; right: 6px; top: 6px; }
.tabbar-layers .tab { line-height: 18px; }

/* assets */
.assets { width: 263px; margin-left: 1px; flex: none; display: flex; flex-direction: column; background: #333; }
.assets-select { height: 28px; flex: none; background: #3a3a3a; padding: 5px 0 0 4px; border-bottom: 2px solid #2a2a2a; }
.select { height: 18px; display: flex; align-items: center; justify-content: space-between; background: #2f2f2f; border: 1px solid #262626; border-radius: 2px; padding: 0 6px 0 4px; font-size: 10.800px; color: #d0d0d0; }
.select-ios { width: 118px; }
.assets-body { flex: 1; display: flex; min-height: 0; background: #333; }
.assets-list { width: 243px; flex: none; overflow: hidden; }
.cat-head { height: 23px; background: #2f2f2f; position: relative; display: flex; align-items: center; padding: 1px 0 0 29px; font-size: 11.500px; color: #dcdcdc; }
.cat-tri { position: absolute; left: 6px; top: 8px; }
.cat-head .panel-menu { right: 8px; top: 6px; }
.asset-grid { display: grid; grid-template-columns: repeat(4, 60px); grid-auto-rows: 60px; padding: 0 0 2px 1px; }
.asset svg { width: 60px; height: 60px; }
.asset-pay { display: flex; align-items: center; padding-left: 11px; width: 60px; }
.asset-pay svg { width: 18px; height: 20px; }
.asset-pay span { font-family: Lato, sans-serif; font-weight: 300; font-size: 25px; color: #fff; margin-left: 4px; line-height: 1; }
.tiny { font-size: 4.500px; fill: #cfcfcf; text-anchor: middle; }
.lab { font-size: 11.500px; fill: #2a74d0; }
.ln-w, .ln-b { fill: none; stroke-width: 1.100; }
.ln-w { stroke: #f0f0f0; }
.ln-b { stroke: #2a6cc0; }
.ln-2 { stroke-width: 1.600; }

.vscroll { flex: none; display: flex; flex-direction: column; align-items: center; background: #3a3a3a; padding: 6px 0; }
.vscroll-assets { width: 18px; margin-right: 2px; border-left: 1px solid #383838; }
.vscroll-doc { width: 19px; background: #3c3c3c; margin-top: -10px; }
.track { flex: 1; width: 7px; position: relative; }
.thumb { position: absolute; left: 0; width: 7px; background: #7c7c7c; border-radius: 3.500px; }
.thumb-assets { top: 6px; height: 72px; background: #6c6c6c; }
.thumb-doc { top: 193px; height: 162px; background: #8a8a8a; }

.searchbar { height: 31px; flex: none; background: #383838; border-top: 1px solid #2a2a2a; padding: 4px 4px 3px 3px; }
.searchbox { height: 22px; background: #2c2c2c; border-radius: 2px; display: flex; align-items: center; gap: 4px; padding-left: 6px; color: #8a8a8a; font-size: 10.800px; }

/* document */
.document { width: 576px; flex: none; margin-left: 2px; display: flex; flex-direction: column; min-width: 0; }
.doc-tab { height: 22px; flex: none; background: #3e3e3e; display: flex; align-items: center; justify-content: space-between; padding: 0 10px 0 9px; color: #d8d8d8; font-size: 10.600px; }
.doc-view { flex: 1; display: flex; flex-direction: column; min-height: 0; }
.doc-canvas { flex: 1; display: flex; min-height: 0; background: #222; padding-top: 10px; }
.doc-gutter { width: 14px; flex: none; }
.page { width: 543px; flex: none; background: #fff; }
.art { width: 100%; height: 100%; }
.hscroll { height: 18px; flex: none; background: #3c3c3c; display: flex; align-items: center; padding: 0 22px 0 6px; }
.htrack { flex: 1; height: 7px; position: relative; }
.hthumb { position: absolute; left: 184px; width: 149px; height: 7px; border-radius: 3.500px; background: #808080; }

/* right panel */
.right { width: 269px; flex: none; display: flex; flex-direction: column; background: #3c3c3c; }
.right .tabbar { border-left: 1px solid #333; }
.color-panel { height: 237px; flex: none; position: relative; background: #3e3e3e; }
.color-tools { position: absolute; left: 0; top: 0; }
.wheel { position: absolute; left: 62px; top: 37px; width: 149px; height: 149px; border-radius: 50%; background: conic-gradient(from 90deg, #f00, #ff0, #0f0, #0ff, #00f, #f0f, #f00); -webkit-mask: radial-gradient(circle, transparent 60px, #000 60.500px); mask: radial-gradient(circle, transparent 60px, #000 60.500px); }
.tri { position: absolute; left: 0; top: 0; }
.hsl { position: absolute; left: 11px; top: 153px; display: flex; flex-direction: column; font-size: 10px; line-height: 13px; color: #d0d0d0; }
.hsl-in { padding-left: 1px; }
.op-label { position: absolute; left: 15px; top: 195px; font-size: 10.500px; line-height: 14px; color: #ccc; }
.op-row { position: absolute; left: 21px; top: 208px; width: 238px; height: 21px; display: flex; align-items: center; }
.op-swatch { width: 13px; height: 13px; border-radius: 50%; background: #4c9ac9; border: 1px solid #2e2e2e; }
.op-slider { width: 146px; height: 7px; margin-left: 7px; position: relative; border-radius: 3.500px; background: linear-gradient(90deg, #fff, rgba(255, 255, 255, 0)), repeating-conic-gradient(#6a6a6a 0 25%, #3c3c3c 0 50%) 0 0 / 6px 6px; }
.op-ring { position: absolute; right: -5px; top: -2px; width: 11px; height: 11px; border-radius: 50%; border: 1.200px solid #eee; background: #333; }
.op-input { margin-left: 11px; width: 59px; height: 20px; background: #2f2f2f; border: 1px solid #262626; border-radius: 2px; display: flex; align-items: center; font-size: 11px; color: #d8d8d8; padding-left: 5px; justify-content: space-between; }
.op-drop { width: 15px; height: 18px; background: #3c3c3c; display: flex; align-items: center; justify-content: center; }

.tabbar-layers { height: 24px; border-top: 1px solid #2a2a2a; }
.layers-panel { flex: 1; min-height: 0; background: #3c3c3c; }
.layers-ctl { height: 28px; background: #3e3e3e; display: flex; align-items: center; padding-left: 8px; position: relative; }
.dim-label { width: 42px; color: #4e4e4e; font-size: 10.500px; }
.select-dis { background: #383838; border-color: #2a2a2a; color: #6e6e6e; font-size: 11px; }
.select-op { width: 74px; height: 19px; margin-right: 4px; }
.select-norm { width: 94px; height: 19px; }
.gear { margin-left: 5px; }
.lock { margin-left: 11px; }
.layer { height: 31px; width: 253px; border-bottom: 1px solid #111; display: flex; align-items: center; position: relative; padding-left: 22px; }
.thumb-box { width: 28px; height: 28px; border: 1px solid #111; flex: none; }
.thumb-blue { width: 100%; height: 100%; background: #4c9ac9; }
.layer-name { margin-left: 4px; font-size: 11px; color: #c8c8c8; }
.check { margin-left: auto; margin-right: 4px; width: 12px; height: 12px; border: 1px solid #bbb; border-radius: 2px; display: flex; align-items: center; justify-content: center; }

.layers-foot { height: 23px; flex: none; background: #3f3f3f; display: flex; align-items: center; padding-left: 6px; }
.stack-btn { width: 21px; height: 22px; background: #2a2a2a; display: flex; align-items: center; justify-content: center; }
.foot-mask { margin-left: 72px; }
.foot-adj { margin-left: 8px; }
.fx { font-family: "Liberation Serif", serif; font-style: italic; font-size: 15px; color: #a8a8a8; margin-left: 9px; width: 15px; }
.foot-doc { margin-left: 46px; }
.foot-chk { margin-left: 11px; }
.foot-trash { margin-left: 12px; }

.tabbar-tr { height: 24px; }
.tabbar-tr .tab { height: 22px; line-height: 21px; }
.transform { flex: none; height: 104px; background: #3c3c3c; position: relative; display: flex; padding: 12px 0 0 22px; }
.anchor { margin-top: 9px; }
.tr-grid { display: grid; grid-template-columns: 19px 64px 29px 65px; margin-left: 15px; row-gap: 5px; align-content: start; align-items: center; color: #4e4e4e; font-size: 10.500px; }
.tr-grid label { padding-right: 4px; text-align: right; }
.field { width: 100%; height: 19px; background: #383838; border: 1px solid #2a2a2a; border-radius: 2px; padding-left: 5px; line-height: 17px; font-size: 11px; color: #707070; }
.field-drop { display: flex; align-items: center; justify-content: space-between; padding-right: 5px; }
.tr-gap { margin-top: 6px; }
.link { position: absolute; left: 256px; top: 27px; }

/* status */
.status { height: 25px; flex: none; background: #333; display: flex; align-items: center; justify-content: space-between; padding: 0 2px 0 14px; font-size: 11.400px; color: #a8a8a8; }
.status b { color: #e8e8e8; font-weight: 700; }
```
